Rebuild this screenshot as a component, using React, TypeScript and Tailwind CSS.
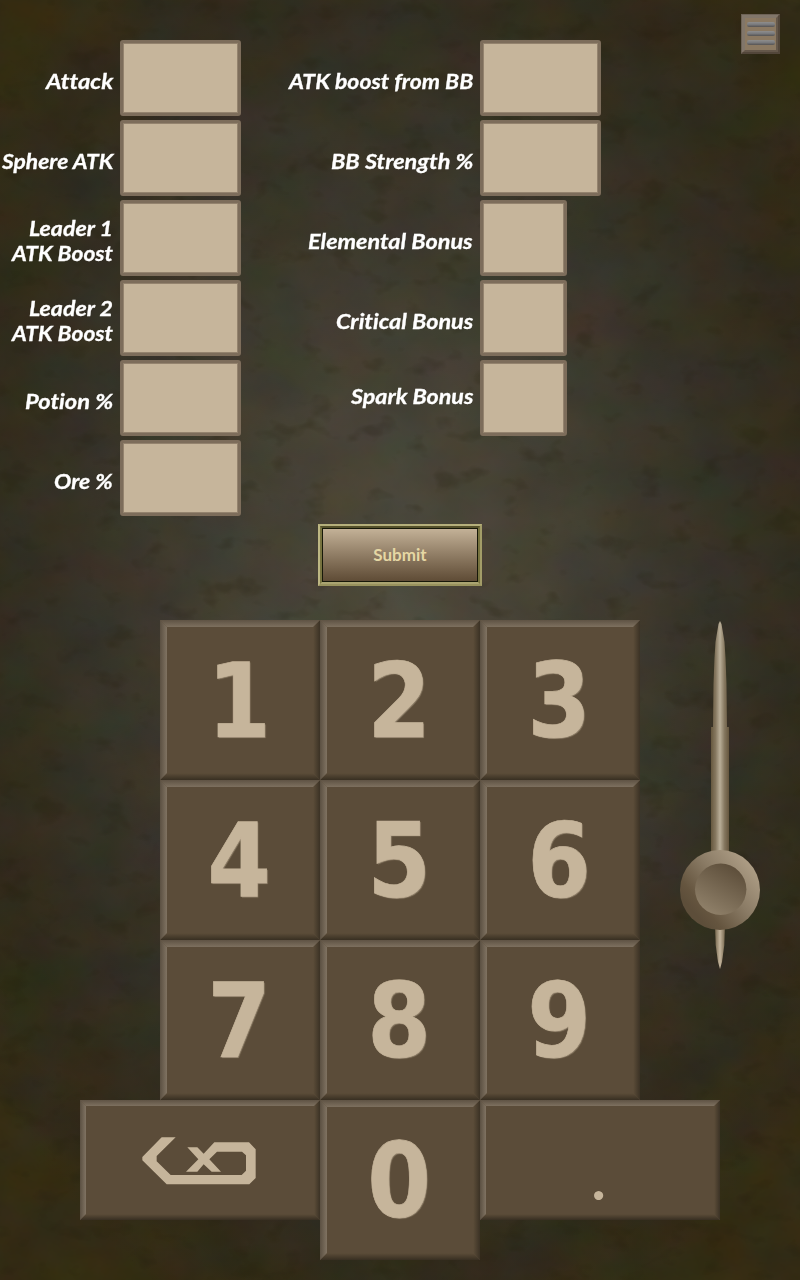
import React, { useLayoutEffect, useRef } from "react";

type Field = { lines: { text: string; width: number }[]; box: string; lift?: boolean };

const leftFields: Field[] = [
  { lines: [{ text: "Attack", width: 67 }], box: "w-[121px]" },
  { lines: [{ text: "Sphere ATK", width: 111 }], box: "w-[121px]" },
  { lines: [{ text: "Leader 1", width: 84 }, { text: "ATK Boost", width: 101 }], box: "w-[121px]" },
  { lines: [{ text: "Leader 2", width: 84 }, { text: "ATK Boost", width: 101 }], box: "w-[121px]" },
  { lines: [{ text: "Potion %", width: 88 }], box: "w-[121px]" },
  { lines: [{ text: "Ore %", width: 59 }], box: "w-[121px]" },
];

const rightFields: Field[] = [
  { lines: [{ text: "ATK boost from BB", width: 184 }], box: "w-[121px]" },
  { lines: [{ text: "BB Strength %", width: 142 }], box: "w-[121px]" },
  { lines: [{ text: "Elemental Bonus", width: 165 }], box: "w-[87px]" },
  { lines: [{ text: "Critical Bonus", width: 137 }], box: "w-[87px]" },
  { lines: [{ text: "Spark Bonus", width: 122 }], box: "w-[87px]", lift: true },
];

// squeezes a line of text to the given width, keeping its right edge
function FitText({ text, width }: { text: string; width: number }) {
  const ref = useRef<HTMLSpanElement>(null);

  useLayoutEffect(() => {
    const el = ref.current;
    if (el) el.style.transform = `scaleX(${width / el.offsetWidth})`;
  }, [text, width]);

  return (
    <span ref={ref} className="block w-max origin-right">
      {text}
    </span>
  );
}

function FieldRow({ field }: { field: Field }) {
  return (
    <div className="flex h-20 items-start justify-end">
      <div
        className={`flex h-20 flex-col items-end justify-center pr-[7px] font-['Lato',sans-serif] text-[21px] leading-[25px] font-bold whitespace-nowrap text-white italic [font-variant-ligatures:none] [-webkit-text-stroke:0.3px_white] ${
          field.lift ? "pb-[9px]" : ""
        }`}
      >
        {field.lines.map((l) => (
          <FitText key={l.text} text={l.text} width={l.width} />
        ))}
      </div>
      <div
        className={`h-[76px] shrink-0 rounded-[3px] border-[3px] border-[#7d6d5b] bg-[#c6b59b] shadow-[inset_0_0_0_1px_#94836e] ${field.box}`}
      />
    </div>
  );
}

function Bevel({ w, h, size = 7 }: { w: number; h: number; size?: number }) {
  const id = `${w}-${h}`;
  return (
    <svg className="absolute inset-0" width={w} height={h}>
      <defs>
        <linearGradient id={`l-${id}`} gradientUnits="userSpaceOnUse" x1="0" x2={size}>
          <stop offset="0" stopColor="#5b5042" />
          <stop offset="1" stopColor="#807362" />
        </linearGradient>
        <linearGradient id={`t-${id}`} gradientUnits="userSpaceOnUse" x1="0" x2="0" y1="0" y2={size}>
          <stop offset="0" stopColor="#5f5344" />
          <stop offset="1" stopColor="#7d705f" />
        </linearGradient>
        <linearGradient id={`r-${id}`} gradientUnits="userSpaceOnUse" x1={w - size} x2={w}>
          <stop offset="0" stopColor="#5c4d39" />
          <stop offset="1" stopColor="#3b3225" />
        </linearGradient>
        <linearGradient id={`b-${id}`} gradientUnits="userSpaceOnUse" x1="0" x2="0" y1={h - size} y2={h}>
          <stop offset="0" stopColor="#5c4d39" />
          <stop offset="1" stopColor="#382f22" />
        </linearGradient>
      </defs>
      <path d={`M${w} 0V${h}L${w - size} ${h - size}V${size}Z`} fill={`url(#r-${id})`} />
      <path d={`M0 ${h}H${w}L${w - size} ${h - size}H${size}Z`} fill={`url(#b-${id})`} />
      <path d={`M0 0V${h}L${size} ${h - size}V${size}Z`} fill={`url(#l-${id})`} />
      <path d={`M0 0H${w}L${w - size} ${size}H${size}Z`} fill={`url(#t-${id})`} />
    </svg>
  );
}

function DigitKey({ digit }: { digit: string }) {
  return (
    <button className="relative flex h-40 w-40 items-center justify-center bg-[#5b4c39]">
      <Bevel w={160} h={160} />
      <span className="relative mt-[2px] mr-[2px] block scale-x-[0.88] font-['DejaVu_Sans',sans-serif] text-[104px] leading-[160px] font-bold text-[#c6b59b] [-webkit-text-stroke:0.7px_#c6b59b] [text-shadow:1px_1px_1px_#90806a]">
        {digit}
      </span>
    </button>
  );
}

function Slider() {
  return (
    <svg className="ml-10 shrink-0" width="80" height="350" viewBox="0 0 80 350">
      <defs>
        <linearGradient id="rod" gradientUnits="userSpaceOnUse" x1="31" x2="49">
          <stop offset="0" stopColor="#66583f" />
          <stop offset="0.25" stopColor="#85775f" />
          <stop offset="0.5" stopColor="#b9ae98" />
          <stop offset="0.75" stopColor="#85775f" />
          <stop offset="1" stopColor="#65563e" />
        </linearGradient>
        <linearGradient id="tip" gradientUnits="userSpaceOnUse" x1="35" x2="45">
          <stop offset="0" stopColor="#77684f" />
          <stop offset="0.5" stopColor="#c3b49c" />
          <stop offset="1" stopColor="#77684f" />
        </linearGradient>
        <linearGradient id="knob" x1="0.85" y1="0.15" x2="0.15" y2="0.75">
          <stop offset="0" stopColor="#ac9c84" />
          <stop offset="0.45" stopColor="#8a7b65" />
          <stop offset="0.85" stopColor="#65553f" />
          <stop offset="1" stopColor="#5d4e3a" />
        </linearGradient>
        <linearGradient id="dish" x1="0.75" y1="0.1" x2="0.25" y2="0.95">
          <stop offset="0" stopColor="#5f503c" />
          <stop offset="1" stopColor="#8f8069" />
        </linearGradient>
      </defs>
      <path d="M40 1L41.5 4L44.500 22L45.500 38L46.500 64L47 107H49V240H31V107H33L33.500 64L34.500 38L35.500 22L38.500 4Z" fill="url(#rod)" />
      <path d="M35 305H45L44.300 325L42 342L40 349L38 342L35.700 325Z" fill="url(#tip)" />
      <circle cx="40" cy="270" r="40" fill="url(#knob)" />
      <circle cx="40.700" cy="269.300" r="25.700" fill="url(#dish)" />
    </svg>
  );
}

function MenuButton() {
  return (
    <svg className="absolute top-[14px] left-[741px]" width="40" height="40" viewBox="0 0 40 40">
      <defs>
        <linearGradient id="menubar" x1="0" x2="0" y1="0" y2="1">
          <stop offset="0" stopColor="#8f8e8d" />
          <stop offset="0.5" stopColor="#797a7d" />
          <stop offset="1" stopColor="#565352" />
        </linearGradient>
      </defs>
      <path d="M0 0H39V40H0Z" fill="#8b7962" />
      <path d="M0 0H39L35 4H4V36L0 40Z" fill="#81766a" />
      <path d="M0 0H39L38 1H1V39L0 40Z" fill="#6d6256" />
      <path d="M39 0V40H0L4 36H35V4Z" fill="#64574a" />
      <path d="M39 0V40H0L2 38H37V2Z" fill="#52463a" />
      {[8, 17, 26].map((y) => (
        <rect key={y} x="6" y={y} width="28" height="5" rx="2" fill="url(#menubar)" />
      ))}
    </svg>
  );
}

function Backdrop() {
  return (
    <svg className="absolute inset-0" width="800" height="1280">
      <defs>
        <radialGradient id="glow" gradientUnits="userSpaceOnUse" cx="0" cy="0" r="1" gradientTransform="translate(400 590) scale(520 790)">
          <stop offset="0" stopColor="#514d40" />
          <stop offset="0.3" stopColor="#454236" />
          <stop offset="0.6" stopColor="#363328" />
          <stop offset="0.85" stopColor="#2f2a1b" />
          <stop offset="1" stopColor="#322b13" />
        </radialGradient>
        <filter id="mottle" x="0" y="0" width="100%" height="100%" colorInterpolationFilters="sRGB">
          <feTurbulence type="fractalNoise" baseFrequency="0.016 0.02" numOctaves="5" seed="8" />
          <feColorMatrix values="0.5 0 0 0 -0.02  0 0.36 0 0 0.02  0 0 0.5 0 -0.12  0 0 0 0 1" />
        </filter>
        <filter id="blots" x="0" y="0" width="100%" height="100%" colorInterpolationFilters="sRGB">
          <feTurbulence type="fractalNoise" baseFrequency="0.03 0.045" numOctaves="3" seed="21" />
          <feColorMatrix values="0 0 0 0 0.13  0 0 0 0 0.11  0 0 0 0 0.04  5 0 0 0 -3" />
        </filter>
      </defs>
      <rect width="800" height="1280" fill="url(#glow)" />
      <rect width="800" height="1280" filter="url(#mottle)" opacity="0.12" />
      <rect width="800" height="1280" filter="url(#blots)" opacity="0.2" />
    </svg>
  );
}

export default function App() {
  return (
    <div className="relative h-[1280px] w-[800px] overflow-hidden bg-[#302a1b]">
      <Backdrop />
      <MenuButton />
      <div className="relative flex flex-col">
        <div className="flex h-[484px] pt-10">
          <div className="w-[241px]">
            {leftFields.map((f, i) => (
              <FieldRow key={i} field={f} />
            ))}
          </div>
          <div className="flex w-[360px] flex-col">
            {rightFields.map((f, i) => (
              <div key={i} className={f.box === "w-[87px]" ? "pr-[34px]" : ""}>
                <FieldRow field={f} />
              </div>
            ))}
          </div>
        </div>

        <div className="mt-10 ml-[318px] h-[62px] w-[164px] border-2 border-t-[#b5af7b] border-r-[#a39d68] border-b-[#98925d] border-l-[#bdb783] bg-[#a49e6a]">
          <div className="h-[58px] border-2 border-t-[#55512a] border-r-[#77733f] border-b-[#aaa471] border-l-[#77733f]">
            <button className="flex h-[54px] w-full items-center justify-center border border-[#171809] bg-linear-to-b from-[#c3b197] to-[#5f4c36] font-['Lato',sans-serif] text-[17px] font-bold text-[#e5d7a4]">
              Submit
            </button>
          </div>
        </div>

        <div className="mt-[34px] ml-40 flex">
          <div className="grid grid-cols-[160px_160px_160px]">
            {["1", "2", "3", "4", "5", "6", "7", "8", "9"].map((d) => (
              <DigitKey key={d} digit={d} />
            ))}
          </div>
          <Slider />
        </div>
        <div className="ml-20 flex items-start">
          <button className="relative flex h-[120px] w-60 bg-[#5b4c39] pt-[35px] pl-[60px]">
            <Bevel w={240} h={120} size={6} />
            <svg className="relative" width="118" height="52" viewBox="210 165 354 156">
              <path
                d="M275 172H317L260 228V244L302 285H515L528 272V226L516 215H441L418 238L453 275H425L401 253L382 275H348L385 238L352 202H382L401 221L433 187H537L557 208V294L538 313H290L217 241V231Z"
                fill="#c6b59b"
              />
            </svg>
          </button>
          <DigitKey digit="0" />
          <button className="relative h-[120px] w-60 bg-[#5b4c39]">
            <Bevel w={240} h={120} size={6} />
            <span className="relative block pt-[34px] pr-[3px] font-['Lato',sans-serif] text-[60px] leading-[86px] font-bold text-[#c6b59b]">
              .
            </span>
          </button>
        </div>
      </div>
    </div>
  );
}
